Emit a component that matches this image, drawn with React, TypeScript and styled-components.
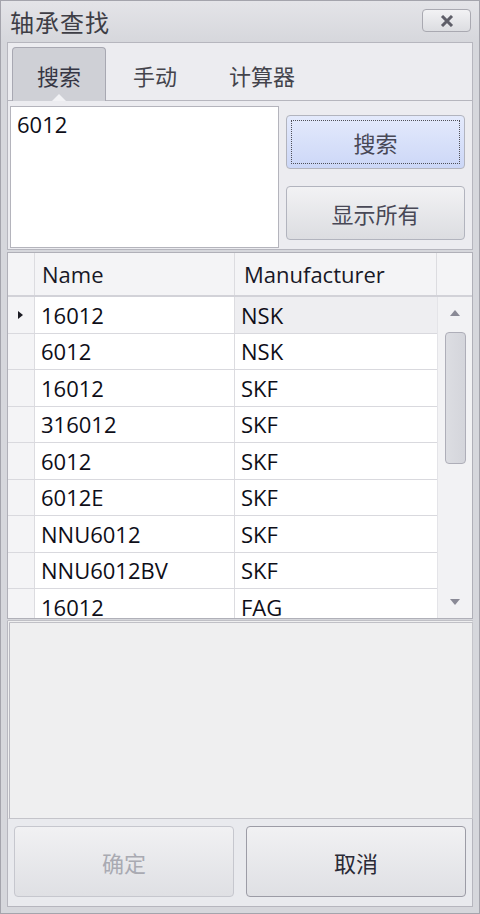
import React from "react";
import styled, { createGlobalStyle } from "styled-components";

const GlobalStyle = createGlobalStyle`
  html, body {
    margin: 0;
    padding: 0;
    background: #d5d6db;
  }
  * { box-sizing: border-box; }
`;

const cjk = `"Noto Sans CJK SC", "Noto Sans", sans-serif`;
const latin = `"Open Sans", "Noto Sans CJK SC", sans-serif`;

const Window = styled.div`
  width: 480px;
  height: 914px;
  border: 1px solid #a4a4ac;
  background: #d6d7dc;
  display: flex;
  flex-direction: column;
  overflow: hidden;
`;

const TitleBar = styled.div`
  height: 41px;
  flex: none;
  display: flex;
  align-items: center;
  justify-content: space-between;
  padding: 0 8px 0 9px;
  background: linear-gradient(#e4e4e8, #d6d7dc);
`;

const Title = styled.span`
  font-family: ${cjk};
  font-size: 24px;
  color: #3e3e46;
  letter-spacing: 1px;
`;

const CloseButton = styled.button`
  width: 49px;
  height: 23px;
  margin-top: -2px;
  border: 1px solid #a9a9b1;
  border-radius: 4px;
  background: linear-gradient(#f2f2f4, #dcdde1);
  display: flex;
  align-items: center;
  justify-content: center;
  padding: 0;
`;

const Content = styled.div`
  flex: 1;
  display: flex;
  flex-direction: column;
  padding: 0 6px 6px 6px;
  min-height: 0;
`;

const TabControl = styled.div`
  height: 208px;
  flex: none;
  display: flex;
  flex-direction: column;
  background: #ececf0;
  border: 1px solid #b6b6be;
`;

const TabStrip = styled.div`
  height: 57px;
  flex: none;
  display: flex;
  align-items: flex-end;
  gap: 2px;
  padding: 0 0 0 4px;
  position: relative;
  z-index: 1;
`;

const Tab = styled.div<{ $active?: boolean }>`
  position: relative;
  height: ${({ $active }) => ($active ? "54px" : "52px")};
  margin-bottom: ${({ $active }) => ($active ? "-1px" : "0")};
  padding: 0 24px;
  display: flex;
  align-items: center;
  justify-content: center;
  font-family: ${cjk};
  font-size: 22px;
  color: ${({ $active }) => ($active ? "#363644" : "#44444c")};
  border: 1px solid ${({ $active }) => ($active ? "#a8a8b2" : "transparent")};
  border-bottom: none;
  border-radius: 4px 4px 0 0;
  background: ${({ $active }) => ($active ? "#cfd0d6" : "transparent")};

  &::after {
    content: "";
    display: ${({ $active }) => ($active ? "block" : "none")};
    position: absolute;
    left: 50%;
    bottom: 0;
    margin-left: -7px;
    border-left: 7px solid transparent;
    border-right: 7px solid transparent;
    border-bottom: 7px solid #f2f2f5;
  }
`;

const TabPage = styled.div`
  flex: 1;
  display: flex;
  gap: 7px;
  padding: 5px 7px 1px 2px;
  border-top: 1px solid #b6b6be;
`;

const SearchBox = styled.div`
  width: 269px;
  flex: none;
  background: #ffffff;
  border: 1px solid #b4b4bc;
  padding: 3px 6px;
  font-family: ${latin};
  font-size: 22px;
  color: #0e0e18;
  line-height: 28px;
`;

const ButtonColumn = styled.div`
  flex: 1;
  display: flex;
  flex-direction: column;
  gap: 17px;
  padding-top: 9px;
`;

const SideButton = styled.button<{ $focused?: boolean }>`
  position: relative;
  height: 54px;
  border: 1px solid #b2b4be;
  border-radius: 4px;
  background: ${({ $focused }) =>
    $focused
      ? "linear-gradient(#e4eafc, #ccd7f7)"
      : "linear-gradient(#f2f2f4, #dcdde1)"};
  font-family: ${cjk};
  font-size: 22px;
  color: #484856;
  padding: 0;

  &::after {
    content: "";
    display: ${({ $focused }) => ($focused ? "block" : "none")};
    position: absolute;
    inset: 4px;
    border: 1px dotted #505058;
  }
`;

const Grid = styled.div`
  height: 367px;
  flex: none;
  margin-top: 2px;
  display: flex;
  flex-direction: column;
  border: 1px solid #b0b0b8;
  background: #f4f4f6;
  overflow: hidden;
`;

const HeaderRow = styled.div`
  height: 44px;
  flex: none;
  display: grid;
  grid-template-columns: 27px 200px 202px 1fr;
  border-bottom: 2px solid #d2d2d8;
  background: #f4f4f6;
`;

const HeaderCell = styled.div<{ $pad?: number }>`
  display: flex;
  align-items: center;
  padding-left: ${({ $pad }) => $pad ?? 0}px;
  border-right: 1px solid #dcdce0;
  font-family: ${latin};
  font-size: 22px;
  color: #181826;
  &:last-child { border-right: none; }
`;

const GridBody = styled.div`
  flex: 1;
  display: flex;
  min-height: 0;
`;

const Rows = styled.div`
  flex: 1;
  overflow: hidden;
`;

const Row = styled.div`
  height: 36.5px;
  display: grid;
  grid-template-columns: 27px 200px 202px;
  border-bottom: 1px solid #d9d9de;
`;

const RowHeader = styled.div`
  display: flex;
  align-items: center;
  justify-content: center;
  background: #f4f4f6;
  border-right: 1px solid #dcdce0;
`;

const Pointer = styled.span`
  width: 0;
  height: 0;
  margin-left: -2px;
  border-top: 4px solid transparent;
  border-bottom: 4px solid transparent;
  border-left: 5px solid #1c1c24;
`;

const Cell = styled.div<{ $current?: boolean }>`
  display: flex;
  align-items: center;
  padding-left: 6px;
  background: ${({ $current }) => ($current ? "#eeeef1" : "#ffffff")};
  border-right: 1px solid #dcdce0;
  font-family: ${latin};
  font-size: 22px;
  color: #0e0e18;
  &:last-child { border-right: none; }
`;

const ScrollBar = styled.div`
  width: 35px;
  flex: none;
  display: flex;
  flex-direction: column;
  align-items: center;
  background: #f2f2f4;
  border-left: 1px solid #e4e4e8;
`;

const Arrow = styled.div`
  height: 32px;
  flex: none;
  display: flex;
  align-items: center;
  justify-content: center;
`;

const Track = styled.div`
  flex: 1;
  width: 100%;
  display: flex;
  justify-content: center;
`;

const Thumb = styled.div`
  width: 21px;
  height: 132px;
  margin-top: 3px;
  border: 1px solid #aeaeb8;
  border-radius: 4px;
  background: linear-gradient(90deg, #dcdde2, #d4d5db);
`;

const Panel = styled.div`
  height: 199px;
  flex: none;
  margin-top: 1px;
  background: #efeff0;
  border: 1px solid #c4c4ca;
  border-left: 3px double #b8b8c0;
  border-top: 3px double #c0c0c6;
`;

const BottomBar = styled.div`
  flex: 1;
  display: flex;
  gap: 12px;
  padding: 7px 6px 9px 6px;
  background: #e9eaee;
  border: 1px solid #b6b6be;
  border-top: none;
`;

const DialogButton = styled.button<{ $disabled?: boolean }>`
  flex: 1;
  border: 1px solid ${({ $disabled }) => ($disabled ? "#c6c7ce" : "#9c9ca6")};
  border-radius: 4px;
  background: linear-gradient(#f1f1f3, #dfe0e4);
  font-family: ${cjk};
  font-size: 22px;
  color: ${({ $disabled }) => ($disabled ? "#a9aab2" : "#2a2a36")};
  padding: 0;
`;

const ArrowIcon = ({ up }: { up?: boolean }) => (
  <svg width="10" height="6" viewBox="0 0 10 6">
    <path d={up ? "M0 6 L5 0 L10 6 Z" : "M0 0 L5 6 L10 0 Z"} fill="#8a8a96" />
  </svg>
);

const rows: [string, string][] = [
  ["16012", "NSK"],
  ["6012", "NSK"],
  ["16012", "SKF"],
  ["316012", "SKF"],
  ["6012", "SKF"],
  ["6012E", "SKF"],
  ["NNU6012", "SKF"],
  ["NNU6012BV", "SKF"],
  ["16012", "FAG"],
];

export default function App() {
  return (
    <>
      <GlobalStyle />
      <Window>
        <TitleBar>
          <Title>轴承查找</Title>
          <CloseButton aria-label="close">
            <svg width="14" height="12" viewBox="0 0 14 12">
              <path d="M2 1 L12 11 M12 1 L2 11" stroke="#5e5e68" strokeWidth="3" />
            </svg>
          </CloseButton>
        </TitleBar>
        <Content>
          <TabControl>
            <TabStrip>
              <Tab $active>搜索</Tab>
              <Tab>手动</Tab>
              <Tab>计算器</Tab>
            </TabStrip>
            <TabPage>
              <SearchBox>6012</SearchBox>
              <ButtonColumn>
                <SideButton $focused>搜索</SideButton>
                <SideButton>显示所有</SideButton>
              </ButtonColumn>
            </TabPage>
          </TabControl>

          <Grid>
            <HeaderRow>
              <HeaderCell />
              <HeaderCell $pad={7}>Name</HeaderCell>
              <HeaderCell $pad={9}>Manufacturer</HeaderCell>
              <HeaderCell />
            </HeaderRow>
            <GridBody>
              <Rows>
                {rows.map(([name, maker], i) => (
                  <Row key={i}>
                    <RowHeader>{i === 0 && <Pointer />}</RowHeader>
                    <Cell>{name}</Cell>
                    <Cell $current={i === 0}>{maker}</Cell>
                  </Row>
                ))}
              </Rows>
              <ScrollBar>
                <Arrow>
                  <ArrowIcon up />
                </Arrow>
                <Track>
                  <Thumb />
                </Track>
                <Arrow>
                  <ArrowIcon />
                </Arrow>
              </ScrollBar>
            </GridBody>
          </Grid>

          <Panel />

          <BottomBar>
            <DialogButton $disabled>确定</DialogButton>
            <DialogButton>取消</DialogButton>
          </BottomBar>
        </Content>
      </Window>
    </>
  );
}
